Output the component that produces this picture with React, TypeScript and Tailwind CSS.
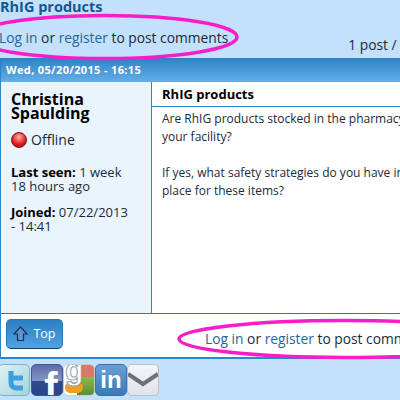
import React from 'react';

function Arrow() {
  return (
    <svg width="15" height="16" viewBox="0 0 15 16">
      <path d="M7.5 1 L14 8 L10.5 8 L10.5 14.5 L4.5 14.5 L4.5 8 L1 8 Z" fill="#5f93d4" stroke="#14304e" strokeWidth="1.2" />
    </svg>
  );
}

function SocialIcons() {
  const box = 'relative w-[32px] h-[32px] rounded-[5px] overflow-hidden shrink-0 border';
  return (
    <div className="flex pt-[5px]">
      <div className={`${box} border-[#7fb3c0] bg-gradient-to-br from-[#dff3f5] to-[#a3d2dc] -ml-[2px]`}>
        <svg className="absolute inset-0" width="30" height="30" viewBox="0 0 30 30">
          <path d="M12 6 V17 Q12 23 18 23 H24 M12 13 H24" fill="none" stroke="#3d9fdc" strokeWidth="5" />
        </svg>
      </div>
      <div className={`${box} ml-px border-[#3d5590] bg-[linear-gradient(#5d6ea8_0%,#8494c4_52%,#2e4a90_53%,#2a4488_100%)] flex justify-center`}>
        <span className="pl-[8px] font-['Liberation_Sans',sans-serif] font-bold text-[40px] leading-[44px] text-white">f</span>
      </div>
      <div className={`${box} border-[#c8d0c4] bg-white`}>
        <div className="absolute right-0 top-0 w-[17px] h-[12px] bg-[#d8796a]" />
        <div className="absolute right-0 top-[12px] w-[17px] h-[20px] bg-[linear-gradient(#8cb84e,#4f8c30)]" />
        <div className="absolute left-[1px] bottom-[2px] w-[18px] h-[11px] rounded-full bg-[#f0a020]" />
        <span className="absolute left-[1px] -top-[10px] font-['Liberation_Sans',sans-serif] font-bold text-[30px] leading-[30px] text-white [-webkit-text-stroke:1px_#8fa0b4]">g</span>
      </div>
      <div className={`${box} border-[#3a70a8] bg-gradient-to-b from-[#6aa0d4] to-[#3a78b8] flex items-center justify-center`}>
        <span className="font-['Liberation_Sans',sans-serif] font-bold text-[24px] leading-[28px] text-white">in</span>
      </div>
      <div className={`${box} border-[#b8c0c8] bg-gradient-to-b from-[#f4f6f8] to-[#dfe3e8]`}>
        <svg className="absolute inset-0" width="30" height="30" viewBox="0 0 30 30">
          <path d="M0 9 L15 19 L30 9" fill="none" stroke="#6e7074" strokeWidth="4" />
        </svg>
      </div>
    </div>
  );
}

export default function App() {
  return (
    <div className="w-[400px] h-[400px] overflow-hidden relative bg-[#c3e0fc] font-['Open_Sans',sans-serif] text-[#1a2a3a]">
      <div className="w-[640px]">
        {/* Title */}
        <h2 className="h-[28px] text-[14.5px] leading-[13px] font-bold text-[#12588f]">RhIG products</h2>

        {/* Top links */}
        <div className="h-[30px] flex items-start justify-between text-[13.8px] leading-[20px]">
          <p className="-ml-px">
            <span className="text-[#2a6496]">Log in</span> or <span className="text-[#2a6496]">register</span> to post comments
          </p>
          <p className="pt-[7px] ml-[120px] flex-1">1 post /</p>
        </div>

        {/* Post panel */}
        <div className="border-l border-r-2 border-b-2 border-[#2a87c8] bg-white">
          <div className="h-[24px] px-[5px] bg-gradient-to-b from-[#2b84c4] to-[#62aeea] text-white text-[11px] tracking-[0.35px] font-bold leading-[24px]">
            Wed, 05/20/2015 - 16:15
          </div>
          <div className="flex h-[232px] border-b border-[#2a7ab8]">
            <div className="w-[151px] shrink-0 border-r border-[#2a87c8] bg-[#eaf4fd] pl-[10px] pr-[18px] pt-[10px] text-[13px] leading-[14px]">
              <div className="text-[16px] leading-[14px] font-bold text-black">Christina Spaulding</div>
              <div className="flex items-center gap-[4px] mt-[11px] text-[14px] leading-[18px]">
                <span className="w-[16px] h-[16px] rounded-full border border-[#7a1010] bg-[radial-gradient(circle_at_50%_30%,#ffb0b0,#e01818_60%,#a01010)]" />
                Offline
              </div>
              <p className="mt-[16px]"><b className="text-black">Last seen:</b> 1 week 18 hours ago</p>
              <p className="mt-[12px]"><b className="text-black">Joined:</b> 07/22/2013 - 14:41</p>
            </div>
            <div className="flex-1">
              <div className="h-[25px] pl-[10px] border-b border-[#2a87c8] text-[13px] font-bold leading-[24px] text-black">RhIG products</div>
              <div className="pl-[10px] pt-[3px] text-[12px] leading-[18px]">
                <p className="w-[262px]">Are RhIG products stocked in the pharmacy in your facility?</p>
                <p className="w-[262px] mt-[18px]">If yes, what safety strategies do you have in place for these items?</p>
              </div>
            </div>
          </div>
          <div className="h-[43px] flex items-start pl-[5px] pt-[5px]">
            <div className="w-[57px] h-[30px] rounded-[5px] border border-[#2478b4] border-b-[#143f60] bg-gradient-to-b from-[#2a80c2] to-[#4fa2e4] flex items-center justify-center gap-[5px] text-white text-[12.5px] font-medium">
              <Arrow />
              Top
            </div>
            <p className="ml-[142px] pt-[10px] text-[13.8px] leading-[20px] whitespace-nowrap">
              <span className="text-[#2a6496]">Log in</span> or <span className="text-[#2a6496]">register</span> to post comments
            </p>
          </div>
        </div>

        <SocialIcons />
      </div>

      {/* Hand drawn highlight ellipses */}
      <svg className="absolute inset-0 pointer-events-none" width="400" height="400" viewBox="0 0 400 400">
        <ellipse cx="105" cy="37" rx="132" ry="21.5" fill="none" stroke="#f81ccb" strokeWidth="3.5" />
        <ellipse cx="345" cy="339" rx="166" ry="18.5" fill="none" stroke="#f81ccb" strokeWidth="3.5" />
      </svg>
    </div>
  );
}
